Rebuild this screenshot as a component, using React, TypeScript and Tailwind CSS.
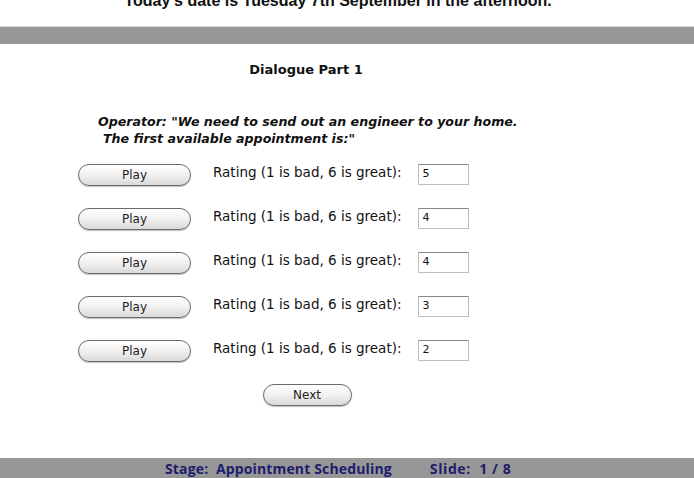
import React from 'react';

const ratings = ['5', '4', '4', '3', '2'];

// Aqua-style pill button
const PillButton = ({ label, className = '' }: { label: string; className?: string }) => (
  <button
    className={`h-[22px] rounded-full border border-[#6b6b6b] bg-gradient-to-b from-white via-[#f1f1f1] to-[#d9d9d9] text-[12px] text-[#222] shadow-[inset_0_1px_0_#fff,0_1px_1px_rgba(0,0,0,0.25)] ${className}`}
    style={{ fontFamily: '"DejaVu Sans", sans-serif' }}
  >
    {label}
  </button>
);

export default function App() {
  return (
    <div className="relative flex h-[478px] w-[694px] flex-col overflow-hidden bg-white">
      {/* Date header */}
      <p
        className="-mt-[9px] h-[20px] pr-[18px] text-center text-[16px] font-bold leading-[20px] text-[#111]"
        style={{ fontFamily: '"Liberation Sans", Arial, sans-serif' }}
      >
        Today's date is Tuesday 7th September in the afternoon.
      </p>

      <div className="mt-[15px] h-[18px] border-t border-[#dcdcdc] bg-[#979797]" />

      <div
        className="ml-[78px] flex w-[456px] flex-col text-[#111]"
        style={{ fontFamily: '"DejaVu Sans", sans-serif' }}
      >
        <h2 className="mt-[17px] text-center text-[13px] font-bold leading-[18px]">Dialogue Part 1</h2>

        <p className="mt-[34px] ml-[20px] text-[12.6px] font-bold italic leading-[17px]">
          Operator: "We need to send out an engineer to your home.
          <br />
          <span className="ml-[5px]">The first available appointment is:"</span>
        </p>

        <div className="mt-[17px] flex flex-col gap-[22px]">
          {ratings.map((value, i) => (
            <div key={i} className="flex h-[22px] items-center">
              <PillButton label="Play" className="w-[113px]" />
              <span className="ml-[22px] -mt-[6px] text-[13.5px] leading-[16px]">Rating (1 is bad, 6 is great):</span>
              <div className="ml-[16px] -mt-[2px] flex h-[21px] w-[51px] items-center border border-[#bdbdbd] border-t-[#8a8a8a] pl-[4px] text-[11px]">
                {value}
              </div>
            </div>
          ))}
        </div>

        <div className="mt-[22px] flex justify-center">
          <PillButton label="Next" className="ml-[2px] w-[89px]" />
        </div>
      </div>

      {/* Status bar */}
      <div
        className="mt-auto flex h-[20px] items-center bg-[#979797] pl-[165px] text-[14px] font-bold text-[#1d1d6e]"
        style={{ fontFamily: '"Open Sans", sans-serif' }}
      >
        <span className="whitespace-pre tracking-[0.15px]">Stage:  Appointment Scheduling</span>
        <span className="ml-[38px] whitespace-pre tracking-[0.6px]">Slide:  1 / 8</span>
      </div>
    </div>
  );
}
